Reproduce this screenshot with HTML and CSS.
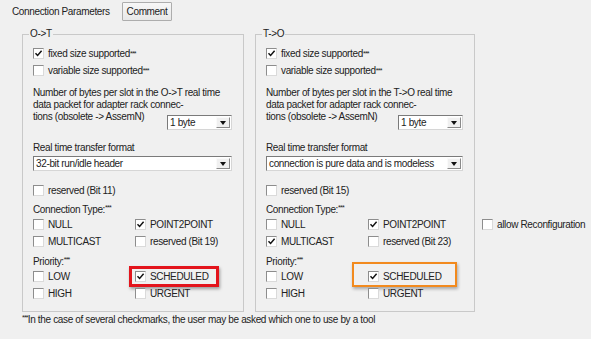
FILE: index.html
```html
<!DOCTYPE html>
<html>
<head>
<meta charset="utf-8">
<link rel="stylesheet" href="styles.css">
</head>
<body>
<div class="top">
  <span class="title">Connection Parameters</span>
  <button class="btn">Comment</button>
</div>
<div class="groups">
  <div class="group group-left">
    <span class="legend">O-&gt;T</span>
    <div class="cb-row"><span class="cb checked"><svg viewBox="0 0 9 9" width="9" height="9"><path d="M1.5 4.2 L3.6 6.4 L7.6 1.8" fill="none" stroke="#111" stroke-width="1.5"/></svg></span>fixed size supported<sup>***</sup></div>
    <div class="cb-row"><span class="cb"></span>variable size supported<sup>***</sup></div>
    <div class="para">
      <div class="line">Number of bytes per slot in the O-&gt;T real time</div>
      <div class="line">data packet for adapter rack connec-</div>
      <div class="para-last"><span class="line">tions (obsolete -&gt; AssemN)</span><div class="combo combo-small"><span class="combo-text">1 byte</span><span class="combo-btn"><span class="tri"></span></span></div></div>
    </div>
    <div class="lbl lbl-format">Real time transfer format</div>
    <div class="combo combo-wide"><span class="combo-text">32-bit run/idle header</span><span class="combo-btn"><span class="tri"></span></span></div>
    <div class="cb-row row-reserved"><span class="cb"></span>reserved (Bit 11)</div>
    <div class="lbl lbl-type">Connection Type:<sup>***</sup></div>
    <div class="grid">
      <div class="cb-row"><span class="cb"></span>NULL</div>
      <div class="cb-row"><span class="cb checked"><svg viewBox="0 0 9 9" width="9" height="9"><path d="M1.5 4.2 L3.6 6.4 L7.6 1.8" fill="none" stroke="#111" stroke-width="1.5"/></svg></span>POINT2POINT</div>
      <div class="cb-row"><span class="cb"></span>MULTICAST</div>
      <div class="cb-row"><span class="cb"></span>reserved (Bit 19)</div>
    </div>
    <div class="lbl lbl-prio">Priority:<sup>***</sup></div>
    <div class="grid">
      <div class="cb-row"><span class="cb"></span>LOW</div>
      <div class="cb-row mark"><span class="cb checked"><svg viewBox="0 0 9 9" width="9" height="9"><path d="M1.5 4.2 L3.6 6.4 L7.6 1.8" fill="none" stroke="#111" stroke-width="1.5"/></svg></span>SCHEDULED<span class="hl hl-red"></span></div>
      <div class="cb-row"><span class="cb"></span>HIGH</div>
      <div class="cb-row"><span class="cb"></span>URGENT</div>
    </div>
  </div>

  <div class="group group-right">
    <span class="legend">T-&gt;O</span>
    <div class="cb-row"><span class="cb checked"><svg viewBox="0 0 9 9" width="9" height="9"><path d="M1.5 4.2 L3.6 6.4 L7.6 1.8" fill="none" stroke="#111" stroke-width="1.5"/></svg></span>fixed size supported<sup>***</sup></div>
    <div class="cb-row"><span class="cb"></span>variable size supported<sup>***</sup></div>
    <div class="para">
      <div class="line">Number of bytes per slot in the T-&gt;O real time</div>
      <div class="line">data packet for adapter rack connec-</div>
      <div class="para-last"><span class="line">tions (obsolete -&gt; AssemN)</span><div class="combo combo-small"><span class="combo-text">1 byte</span><span class="combo-btn"><span class="tri"></span></span></div></div>
    </div>
    <div class="lbl lbl-format">Real time transfer format</div>
    <div class="combo combo-wide"><span class="combo-text">connection is pure data and is modeless</span><span class="combo-btn"><span class="tri"></span></span></div>
    <div class="cb-row row-reserved"><span class="cb"></span>reserved (Bit 15)</div>
    <div class="lbl lbl-type">Connection Type:<sup>***</sup></div>
    <div class="grid">
      <div class="cb-row"><span class="cb"></span>NULL</div>
      <div class="cb-row"><span class="cb checked"><svg viewBox="0 0 9 9" width="9" height="9"><path d="M1.5 4.2 L3.6 6.4 L7.6 1.8" fill="none" stroke="#111" stroke-width="1.5"/></svg></span>POINT2POINT</div>
      <div class="cb-row"><span class="cb checked"><svg viewBox="0 0 9 9" width="9" height="9"><path d="M1.5 4.2 L3.6 6.4 L7.6 1.8" fill="none" stroke="#111" stroke-width="1.5"/></svg></span>MULTICAST</div>
      <div class="cb-row"><span class="cb"></span>reserved (Bit 23)</div>
    </div>
    <div class="lbl lbl-prio">Priority:<sup>***</sup></div>
    <div class="grid">
      <div class="cb-row"><span class="cb"></span>LOW</div>
      <div class="cb-row mark"><span class="cb checked"><svg viewBox="0 0 9 9" width="9" height="9"><path d="M1.5 4.2 L3.6 6.4 L7.6 1.8" fill="none" stroke="#111" stroke-width="1.5"/></svg></span>SCHEDULED<span class="hl hl-orange"></span></div>
      <div class="cb-row"><span class="cb"></span>HIGH</div>
      <div class="cb-row"><span class="cb"></span>URGENT</div>
    </div>
  </div>

  <div class="cb-row allow"><span class="cb"></span>allow Reconfiguration</div>
</div>
<div class="footer"><sup>***</sup>In the case of several checkmarks, the user may be asked which one to use by a tool</div>
</body>
</html>
```

FILE: styles.css
```css
html, body {
  margin: 0;
  padding: 0;
  background: #f0f0f0;
}
body {
  font-family: "Liberation Sans", Arial, sans-serif;
  font-size: 10px;
  letter-spacing: -0.35px;
  color: #222;
  width: 591px;
  height: 339px;
  overflow: hidden;
}
sup {
  font-size: 7px;
  line-height: 0;
  vertical-align: 3px;
  letter-spacing: -0.8px;
}
.top {
  display: flex;
  align-items: center;
  padding: 2px 0 0 12px;
  height: 19px;
}
.title {
  width: 110px;
  white-space: nowrap;
}
.btn {
  box-sizing: border-box;
  width: 50px;
  height: 19px;
  margin: 0;
  padding: 0;
  font: inherit;
  letter-spacing: inherit;
  color: #222;
  background: linear-gradient(#f7f7f7, #e8e8e8);
  border: 1px solid #adadad;
  border-radius: 1px;
}
.groups {
  display: flex;
  align-items: flex-start;
  padding-left: 22px;
  margin-top: 13px;
}
.group {
  position: relative;
  box-sizing: border-box;
  height: 278px;
  border: 1px solid #c9c9c9;
  padding: 10px 11px 9px 10px;
}
.group-left {
  width: 222px;
}
.group-right {
  width: 220px;
  margin-left: 11px;
}
.legend {
  position: absolute;
  top: -7px;
  left: 6px;
  padding: 0 1px;
  line-height: 12px;
  background: #f0f0f0;
}
.cb-row {
  display: flex;
  align-items: center;
  height: 17px;
  white-space: nowrap;
  position: relative;
}
.cb {
  box-sizing: border-box;
  flex: none;
  width: 11px;
  height: 11px;
  margin-right: 4px;
  background: #fff;
  border: 1px solid;
  border-color: #8d8d8d #dadada #dadada #8d8d8d;
  display: flex;
  align-items: center;
  justify-content: center;
}
.cb svg {
  display: block;
}
.para {
  margin-top: 8px;
}
.line {
  line-height: 12px;
  white-space: nowrap;
}
.para-last {
  display: flex;
  align-items: flex-start;
  height: 19px;
}
.combo {
  box-sizing: border-box;
  height: 15px;
  background: #fff;
  border: 1px solid;
  border-color: #7a7a7a #d6d6d6 #d6d6d6 #7a7a7a;
  display: flex;
  align-items: stretch;
}
.combo-small {
  width: 65px;
  margin-left: auto;
  margin-top: 4px;
}
.combo-wide {
  width: 199px;
  margin-top: 2px;
}
.group-right .combo-wide {
  width: 197px;
}
.combo-text {
  flex: 1;
  padding-left: 2px;
  line-height: 13px;
  white-space: nowrap;
  overflow: hidden;
}
.combo-btn {
  box-sizing: border-box;
  width: 14px;
  margin: 1px;
  background: #f0f0f0;
  border: 1px solid;
  border-color: #fafafa #8a8a8a #8a8a8a #fafafa;
  display: flex;
  align-items: center;
  justify-content: center;
}
.tri {
  width: 0;
  height: 0;
  border-left: 3.5px solid transparent;
  border-right: 3.5px solid transparent;
  border-top: 4px solid #111;
}
.lbl {
  line-height: 12px;
}
.lbl-format {
  margin-top: 12px;
}
.row-reserved {
  margin-top: 11px;
}
.lbl-type {
  margin-top: 5px;
}
.lbl-prio {
  margin-top: 6px;
}
.grid {
  display: grid;
  grid-template-columns: 102px 1fr;
}
.hl {
  position: absolute;
  box-sizing: border-box;
  pointer-events: none;
}
.hl-red {
  left: -6px;
  top: -2px;
  width: 90px;
  height: 21px;
  border: 3px solid #e3141c;
  box-shadow: 1px 2px 3px rgba(0, 0, 0, 0.35);
}
.hl-orange {
  left: -16px;
  top: -6px;
  width: 105px;
  height: 25px;
  border: 2px solid #f28a1e;
  box-shadow: 1px 2px 3px rgba(0, 0, 0, 0.3);
}
.allow {
  margin-top: 182px;
  margin-left: 7px;
}
.footer {
  margin-top: 2px;
  padding-left: 22px;
  line-height: 12px;
  white-space: nowrap;
}
```
